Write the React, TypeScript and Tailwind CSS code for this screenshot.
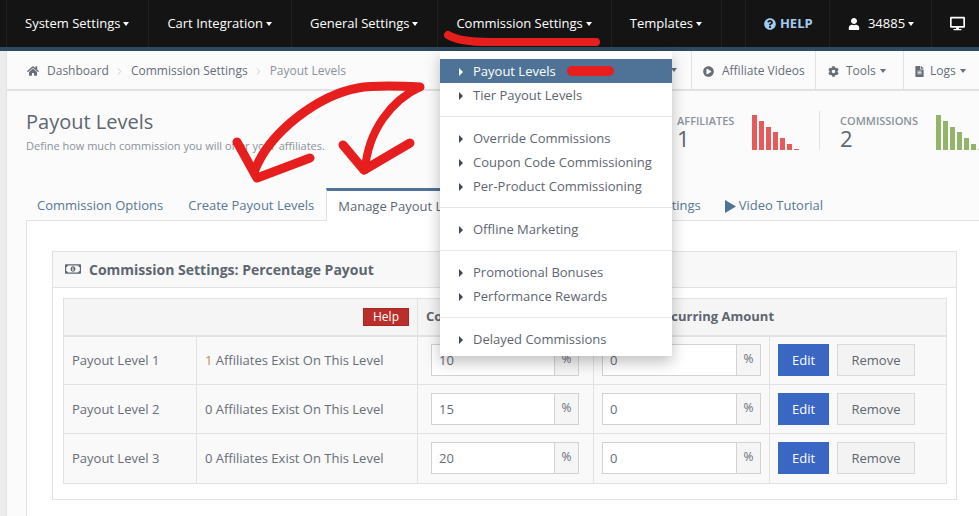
import {
  FaCog,
  FaDesktop,
  FaFileAlt,
  FaHome,
  FaPlayCircle,
  FaQuestionCircle,
  FaRegMoneyBillAlt,
  FaUser,
} from "react-icons/fa";
import { ChevronRight } from "lucide-react";

function Caret({ className = "border-t-white" }: { className?: string }) {
  return <span className={`inline-block w-0 h-0 border-x-[3.5px] border-x-transparent border-t-[4px] ${className}`} />;
}

function NavItem({ label }: { label: string }) {
  return (
    <div className="h-full flex items-center gap-[3px] pl-[18px] pr-[19px] border-l border-[#1f1f1f] text-white text-[13px]">
      {label}
      <Caret />
    </div>
  );
}

function TopNav() {
  return (
    <nav className="h-[51px] shrink-0 bg-[#141414] border-b-4 border-[#2e4a60] flex pl-[6px]">
      <NavItem label="System Settings" />
      <NavItem label="Cart Integration" />
      <NavItem label="General Settings" />
      <NavItem label="Commission Settings" />
      <NavItem label="Templates" />
      <div className="w-[24px] h-full border-l border-[#1f1f1f]" />
      <div className="w-[84px] h-full flex items-center gap-1 pl-[18px] border-l border-[#1f1f1f] text-[#a3cbf0] text-[13px] font-bold">
        <FaQuestionCircle size={12} />
        HELP
      </div>
      <div className="w-[102px] h-full flex items-center pl-[18px] border-l border-[#1f1f1f] text-white text-[13px]">
        <FaUser size={12} className="mr-[8px]" />
        34885
        <Caret className="border-t-white ml-[3px]" />
      </div>
      <div className="flex-1 h-full flex items-center pl-[18px] border-l border-[#1f1f1f] text-white">
        <FaDesktop size={15} />
      </div>
    </nav>
  );
}

function Crumb({ label, last }: { label: string; last?: boolean }) {
  return (
    <>
      <span className={last ? "text-[#8a929b]" : "text-[#666e78]"}>{label}</span>
      {!last && <ChevronRight size={11} className="text-[#c4c8cc] mx-[5.5px]" />}
    </>
  );
}

function BreadcrumbBar() {
  return (
    <div className="h-[40px] shrink-0 flex items-center border-b-2 border-[#e2e2e2] text-[12px]">
      <div className="h-full flex items-center pt-[2px]">
        <FaHome size={12} className="ml-[20px] mr-[8px] text-[#666e78]" />
        <Crumb label="Dashboard" />
        <Crumb label="Commission Settings" />
        <Crumb label="Payout Levels" last />
      </div>
      <div className="ml-auto h-full flex text-[#666e78]">
        <div className="h-full flex items-center pr-[14px]">
          <Caret className="border-t-[#666e78]" />
        </div>
        <div className="w-[124px] h-full flex items-center pt-[2px] pl-[11px] border-l border-[#e2e2e2]">
          <FaPlayCircle size={11} className="mr-[8px]" />
          Affiliate Videos
        </div>
        <div className="w-[88px] h-full flex items-center pt-[2px] pl-[12px] border-l border-[#e2e2e2]">
          <FaCog size={11} className="mr-[7px]" />
          Tools
          <Caret className="border-t-[#666e78] ml-1" />
        </div>
        <div className="w-[76px] h-full flex items-center pt-[2px] pl-[10px] border-l border-[#e2e2e2]">
          <FaFileAlt size={11} className="mr-[5px]" />
          Logs
          <Caret className="border-t-[#666e78] ml-1" />
        </div>
      </div>
    </div>
  );
}

function Bars({ heights, color }: { heights: number[]; color: string }) {
  return (
    <div className="flex items-end gap-[2px] h-[35px] shrink-0">
      {heights.map((h, i) => (
        <div key={i} className={`w-[5px] shrink-0 ${color}`} style={{ height: h }} />
      ))}
    </div>
  );
}

function Stat({ label, value, className }: { label: string; value: string; className: string }) {
  return (
    <div className={`shrink-0 -mt-[1px] ${className}`}>
      <div className="text-[11px] leading-[14px] font-semibold text-[#8a929b]">{label}</div>
      <div className="text-[22px] leading-[20px] text-[#5d6670]">{value}</div>
    </div>
  );
}

function PageHeader() {
  return (
    <div className="h-[97px] shrink-0 flex pl-[19px] pt-[18px]">
      <div className="w-[651px] shrink-0">
        <h1 className="text-[20px] leading-[26px] text-[#5d6670]">Payout Levels</h1>
        <p className="text-[11px] leading-[16px] mt-[3px] text-[#8a929b]">Define how much commission you will offer your affiliates.</p>
      </div>
      <div className="flex items-start pt-[6px] shrink-0">
        <Stat label="AFFILIATES" value="1" className="w-[75px]" />
        <Bars heights={[35, 29, 23, 18, 12, 6, 1]} color="bg-[#e75a5a]" />
        <div className="w-px h-[39px] -mt-[4px] bg-[#e2e2e2] ml-[20px] mr-[20px] shrink-0" />
        <Stat label="COMMISSIONS" value="2" className="w-[96px]" />
        <Bars heights={[35, 29, 23, 18, 12, 6, 1]} color="bg-[#93b56b]" />
      </div>
    </div>
  );
}

function Tabs() {
  const tab = "h-full flex items-center pt-[4px] px-[12px] text-[13px] text-[#557895]";
  return (
    <div className="h-[33px] shrink-0 flex ml-[19px] border-b border-[#e2e2e2]">
      <div className="h-full flex items-center pt-[4px] pl-[11px] pr-[13px] text-[13px] text-[#557895]">Commission Options</div>
      <div className={tab}>Create Payout Levels</div>
      <div className="h-[33px] flex items-center pt-[1px] px-[11px] text-[13px] text-[#5d6670] bg-white border-x border-[#e2e2e2] border-t-[3px] border-t-[#4e7396]">
        Manage Payout Levels
      </div>
      <div className={`${tab} w-[228px] justify-end`}>Advanced Settings</div>
      <div className={`${tab} gap-[3px]`}>
        <svg width="11" height="13" viewBox="0 0 11 13" className="fill-[#4e7396]">
          <path d="M0 0 L11 6.5 L0 13 Z" />
        </svg>
        Video Tutorial
      </div>
    </div>
  );
}

function PercentInput({ value, className }: { value: string; className: string }) {
  return (
    <div className={`flex h-[32px] ${className}`}>
      <div className="flex-1 flex items-center pl-[7px] bg-white border border-[#d2d2d2] text-[#666e78]">{value}</div>
      <div className="w-[24px] pb-[2px] flex items-center justify-center bg-[#f5f5f5] border border-l-0 border-[#d2d2d2] text-[12px] text-[#666e78]">%</div>
    </div>
  );
}

const levels = [
  { name: "Payout Level 1", count: "1", first: "10", second: "0" },
  { name: "Payout Level 2", count: "0", first: "15", second: "0" },
  { name: "Payout Level 3", count: "0", first: "20", second: "0" },
];

function LevelsTable() {
  const cell = "border border-[#e2e2e2] bg-[#f9f9f9] text-[13px] text-[#666e78]";
  const head = "border border-b-[2px] border-[#e2e2e2] bg-[#f5f5f5] text-[13px]";
  return (
    <table className="w-[883px] table-fixed border-collapse">
      <colgroup>
        <col className="w-[133px]" />
        <col className="w-[221px]" />
        <col className="w-[176px]" />
        <col className="w-[176px]" />
        <col className="w-[177px]" />
      </colgroup>
      <thead>
        <tr className="h-[37px]">
          <th colSpan={2} className={`${head} text-right pr-[8px]`}>
            <span className="inline-flex items-center justify-center w-[46px] h-[18px] bg-[#b92f2b] border border-[#a82723] text-white text-[12px] font-normal">Help</span>
          </th>
          <th className={`${head} text-left pl-[8px] font-bold text-[#5d6670]`}>Commission Amount</th>
          <th colSpan={2} className={`${head} text-left pl-[61px] font-bold text-[#5d6670]`}>Recurring Amount</th>
        </tr>
      </thead>
      <tbody>
        {levels.map((l) => (
          <tr key={l.name} className="h-[49.2px]">
            <td className={`${cell} pl-[8px]`}>{l.name}</td>
            <td className={`${cell} pl-[8px] whitespace-nowrap`}>
              <span className={l.count === "1" ? "text-[#c08a52]" : ""}>{l.count}</span> Affiliates Exist On This Level
            </td>
            <td className={cell}>
              <PercentInput value={l.first} className="ml-[13px] mr-[14px]" />
            </td>
            <td className={cell}>
              <PercentInput value={l.second} className="ml-[8px] mr-[8px]" />
            </td>
            <td className={cell}>
              <div className="flex gap-[8px] pl-[8px]">
                <div className="w-[51px] h-[32px] flex items-center justify-center bg-[#3a67c4] text-white text-[13px]">Edit</div>
                <div className="w-[78px] h-[32px] flex items-center justify-center bg-[#f3f3f3] border border-[#d8d8d8] text-[#5d6670] text-[13px]">Remove</div>
              </div>
            </td>
          </tr>
        ))}
      </tbody>
    </table>
  );
}

function Panel() {
  return (
    <div className="flex-1 ml-[19px] bg-white border-l border-[#e2e2e2] pl-[25px] pt-[30px]">
      <div className="w-[905px] h-[249px] border border-[#e2e2e2]">
        <div className="h-[36px] pb-[1px] flex items-center pl-[12px] gap-[8px] bg-[#f8f8f8] border-b border-[#e2e2e2] text-[14px] font-bold text-[#5d6670]">
          <FaRegMoneyBillAlt size={16} />
          Commission Settings: Percentage Payout
        </div>
        <div className="pl-[10px] pt-[10px]">
          <LevelsTable />
        </div>
      </div>
    </div>
  );
}

function MenuItem({ label, active }: { label: string; active?: boolean }) {
  return (
    <div className={`h-[24px] flex items-center pt-[2px] pl-[19px] text-[13px] ${active ? "bg-[#4e7396] text-white" : "text-[#5d6670]"}`}>
      <span className={`w-0 h-0 mr-[10px] border-y-[4px] border-y-transparent border-l-[4px] ${active ? "border-l-white" : "border-l-[#404850]"}`} />
      {label}
    </div>
  );
}

function Divider() {
  return <div className="h-px bg-[#e6e6e6] my-[9px]" />;
}

function CommissionMenu() {
  return (
    <div className="absolute left-[440px] top-[51px] w-[232px] bg-white pt-[8px] pb-[5px] shadow-[0_6px_14px_rgba(0,0,0,0.25)]">
      <MenuItem label="Payout Levels" active />
      <MenuItem label="Tier Payout Levels" />
      <Divider />
      <MenuItem label="Override Commissions" />
      <MenuItem label="Coupon Code Commissioning" />
      <MenuItem label="Per-Product Commissioning" />
      <Divider />
      <MenuItem label="Offline Marketing" />
      <Divider />
      <MenuItem label="Promotional Bonuses" />
      <MenuItem label="Performance Rewards" />
      <Divider />
      <MenuItem label="Delayed Commissions" />
    </div>
  );
}

// hand drawn annotations on top of the screenshot
function Scribbles() {
  return (
    <svg className="absolute inset-0 pointer-events-none" width="979" height="516" fill="none" stroke="#e61e1e" strokeLinecap="round" strokeLinejoin="round">
      <path d="M448 35 C456 40 470 42 490 42 L596 42" strokeWidth="8" />
      <path d="M572 71 L609 71" strokeWidth="10" />
      <path d="M420 87 C400 86 375 85 358 88 C320 95 270 130 254 172" strokeWidth="9" />
      <path d="M237 142 L257 178 L310 158" strokeWidth="9" />
      <path d="M420 87 C392 100 368 130 365 170" strokeWidth="8" />
      <path d="M343 145 L364 170 L410 143" strokeWidth="9" />
    </svg>
  );
}

export default function App() {
  return (
    <div className="relative w-[979px] h-[516px] overflow-hidden flex flex-col bg-[#ececec] font-['Open_Sans',sans-serif]">
      <TopNav />
      <main className="flex-1 min-h-0 ml-[6px] flex flex-col bg-[#fbfbfb] border-l border-[#e2e2e2]">
        <BreadcrumbBar />
        <PageHeader />
        <Tabs />
        <Panel />
      </main>
      <CommissionMenu />
      <Scribbles />
    </div>
  );
}
